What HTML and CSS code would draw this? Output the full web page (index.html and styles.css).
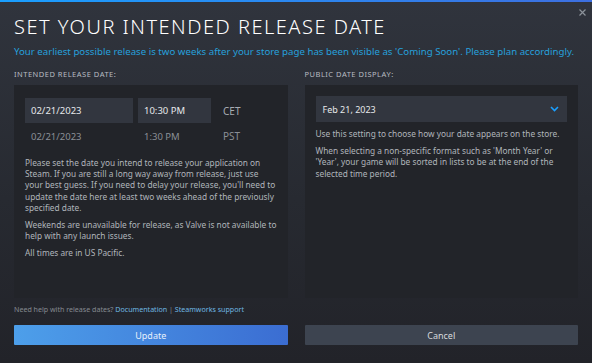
FILE: index.html
```html
<!doctype html>
<html lang="en">
<head>
  <meta charset="UTF-8">
  <title>Set Your Intended Release Date</title>
  <link rel="stylesheet" href="styles.css">
</head>
<body>
  <div class="dialog">
    <div class="close">
      <svg width="7" height="7" viewBox="0 0 7 7"><path d="M0.5 0.5 L6.5 6.5 M6.5 0.5 L0.5 6.5" stroke="#8b929a" stroke-width="1.2"/></svg>
    </div>
    <h1 class="title">Set your intended release date</h1>
    <p class="subtitle">Your earliest possible release is two weeks after your store page has been visible as 'Coming Soon'. Please plan accordingly.</p>

    <div class="columns">
      <div class="column">
        <div class="label">Intended release date:</div>
        <div class="panel">
          <div class="time-row">
            <div class="input input-date">02/21/2023</div>
            <div class="input input-time">10:30 PM</div>
            <div class="zone">CET</div>
          </div>
          <div class="time-row time-row-muted">
            <div class="cell cell-date">02/21/2023</div>
            <div class="cell cell-time">1:30 PM</div>
            <div class="zone">PST</div>
          </div>
          <p class="note">Please set the date you intend to release your application on Steam. If you are still a long way away from release, just use your best guess. If you need to delay your release, you'll need to update the date here at least two weeks ahead of the previously specified date.</p>
          <p class="note">Weekends are unavailable for release, as Valve is not available to help with any launch issues.</p>
          <p class="note">All times are in US Pacific.</p>
        </div>
      </div>
      <div class="column">
        <div class="label">Public date display:</div>
        <div class="panel">
          <div class="select">
            <span>Feb 21, 2023</span>
            <svg width="9" height="6" viewBox="0 0 9 6"><path d="M1 1 L4.5 4.5 L8 1" fill="none" stroke="#1a9fff" stroke-width="1.6"/></svg>
          </div>
          <p class="note note-first">Use this setting to choose how your date appears on the store.</p>
          <p class="note">When selecting a non-specific format such as 'Month Year' or 'Year', your game will be sorted in lists to be at the end of the selected time period.</p>
        </div>
      </div>
    </div>

    <div class="help">Need help with release dates? <a href="#">Documentation</a> | <a href="#">Steamworks support</a></div>

    <div class="buttons">
      <div class="btn btn-primary">Update</div>
      <div class="btn btn-secondary">Cancel</div>
    </div>
  </div>
</body>
</html>
```

FILE: styles.css
```css
html, body {
    margin: 0;
    height: 100%;
}

body {
    background: linear-gradient(180deg, #30343d 0%, #272a31 55%, #222329 100%);
    font-family: "Noto Sans", "Open Sans", Arial, sans-serif;
    color: #b8bcc2;
    overflow: hidden;
}

.dialog {
    position: relative;
    height: 100%;
    box-sizing: border-box;
    padding: 0 14px;
    border-top: 2px solid #1a9fff;
    border-image: linear-gradient(90deg, #1a9fff, #3d6fe0) 1;
}

.close {
    position: absolute;
    top: 7px;
    right: 6px;
    line-height: 0;
}

.title {
    margin: 13px 0 0;
    font-size: 20px;
    line-height: 24px;
    font-weight: 300;
    letter-spacing: 1.5px;
    text-transform: uppercase;
    color: #ffffff;
}

.subtitle {
    margin: 6px 0 0;
    font-size: 9.7px;
    line-height: 14px;
    white-space: nowrap;
    color: #26a0dc;
}

.columns {
    display: grid;
    grid-template-columns: 1fr 1fr;
    gap: 17px;
    margin-top: 10px;
}

.label {
    font-size: 7.5px;
    line-height: 10px;
    letter-spacing: 0.5px;
    text-transform: uppercase;
    color: #b8bcc2;
    margin-bottom: 6px;
}

.panel {
    height: 213px;
    box-sizing: border-box;
    padding: 13px 11px;
    background: #222429;
}

.column:last-child .panel {
    padding-top: 11px;
}

.time-row {
    display: flex;
    align-items: center;
    height: 25px;
}

.time-row-muted {
    height: 26px;
    color: #8a8f96;
}

.input {
    height: 25px;
    box-sizing: border-box;
    padding: 0 6px;
    display: flex;
    align-items: center;
    background: #32363f;
    color: #e6e8ea;
    font-size: 9.5px;
}

.input-date, .cell-date {
    width: 108px;
}

.input-time, .cell-time {
    width: 73px;
    margin-left: 5px;
}

.cell {
    box-sizing: border-box;
    padding: 0 6px;
    font-size: 9.5px;
}

.zone {
    margin-left: 12px;
    font-size: 10px;
    color: #a6abb2;
}

.time-row-muted .zone {
    color: #8a8f96;
}

.note {
    margin: 6px 0 0;
    font-size: 8.3px;
    line-height: 11.2px;
    color: #b0b5bb;
}

.time-row-muted + .note {
    margin-top: 8px;
}

.select {
    height: 26px;
    box-sizing: border-box;
    padding: 0 8px 0 7px;
    display: flex;
    align-items: center;
    justify-content: space-between;
    background: #32363f;
    color: #e6e8ea;
    font-size: 9px;
}

.note-first {
    margin-top: 6px;
}

.help {
    margin-top: 6px;
    font-size: 7.1px;
    line-height: 10px;
    color: #858a91;
}

.help a {
    color: #6fb8e2;
    text-decoration: none;
}

.buttons {
    display: grid;
    grid-template-columns: 1fr 1fr;
    gap: 17px;
    margin-top: 11px;
}

.btn {
    height: 20px;
    display: flex;
    align-items: center;
    justify-content: center;
    font-size: 9px;
    border-radius: 1px;
    cursor: pointer;
}

.btn-primary {
    background: linear-gradient(90deg, #4d9fea 0%, #3b6dd2 100%);
    color: #e6f0fb;
}

.btn-secondary {
    background: #3d4450;
    color: #d7dadd;
}
```
